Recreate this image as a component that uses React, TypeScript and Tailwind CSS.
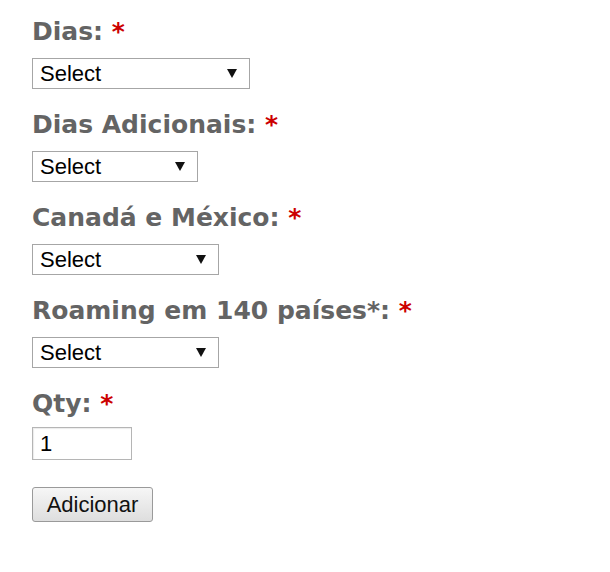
const fields = [
  { label: "Dias:", width: "w-[218px]" },
  { label: "Dias Adicionais:", width: "w-[166px]" },
  { label: "Canadá e México:", width: "w-[187px]" },
  { label: "Roaming em 140 países*:", width: "w-[187px]" },
];

function Label({ text }: { text: string }) {
  return (
    <label className="block font-['DejaVu_Sans',sans-serif] text-[25px] font-bold leading-[30px] text-[#646464]">
      {text} <span className="text-[#cc0000]">*</span>
    </label>
  );
}

function SelectBox({ width }: { width: string }) {
  return (
    <div className={`relative h-[31px] ${width}`}>
      <select
        defaultValue="select"
        className="h-full w-full appearance-none border border-[#a6a6a6] bg-white pl-[7px] font-['Liberation_Sans',Arial,sans-serif] text-[22px] leading-none text-black outline-none"
      >
        <option value="select">Select</option>
      </select>
      <svg
        className="pointer-events-none absolute right-[13px] top-[11px]"
        width="10"
        height="9"
        viewBox="0 0 10 9"
      >
        <path d="M0 0h10L5 9z" fill="#111" />
      </svg>
    </div>
  );
}

export default function App() {
  return (
    <div className="min-h-screen bg-white px-[32px] pt-[17px]">
      <div className="flex flex-col gap-[21px]">
        {fields.map((f) => (
          <div key={f.label} className="flex flex-col gap-[11px]">
            <Label text={f.label} />
            <SelectBox width={f.width} />
          </div>
        ))}
        <div className="flex flex-col gap-[8px]">
          <Label text="Qty:" />
          <input
            defaultValue="1"
            className="h-[33px] w-[100px] border border-[#b5b5b5] bg-white pl-[7px] font-['Liberation_Sans',Arial,sans-serif] text-[22px] text-black outline-none shadow-[inset_1px_1px_1px_rgba(0,0,0,0.08)]"
          />
        </div>
        <div className="mt-[6px]">
          <button className="h-[35px] w-[121px] rounded-[3px] border border-[#9a9a9a] bg-gradient-to-b from-[#f6f6f6] to-[#dedede] font-['Liberation_Sans',Arial,sans-serif] text-[22px] text-[#111]">
            Adicionar
          </button>
        </div>
      </div>
    </div>
  );
}
